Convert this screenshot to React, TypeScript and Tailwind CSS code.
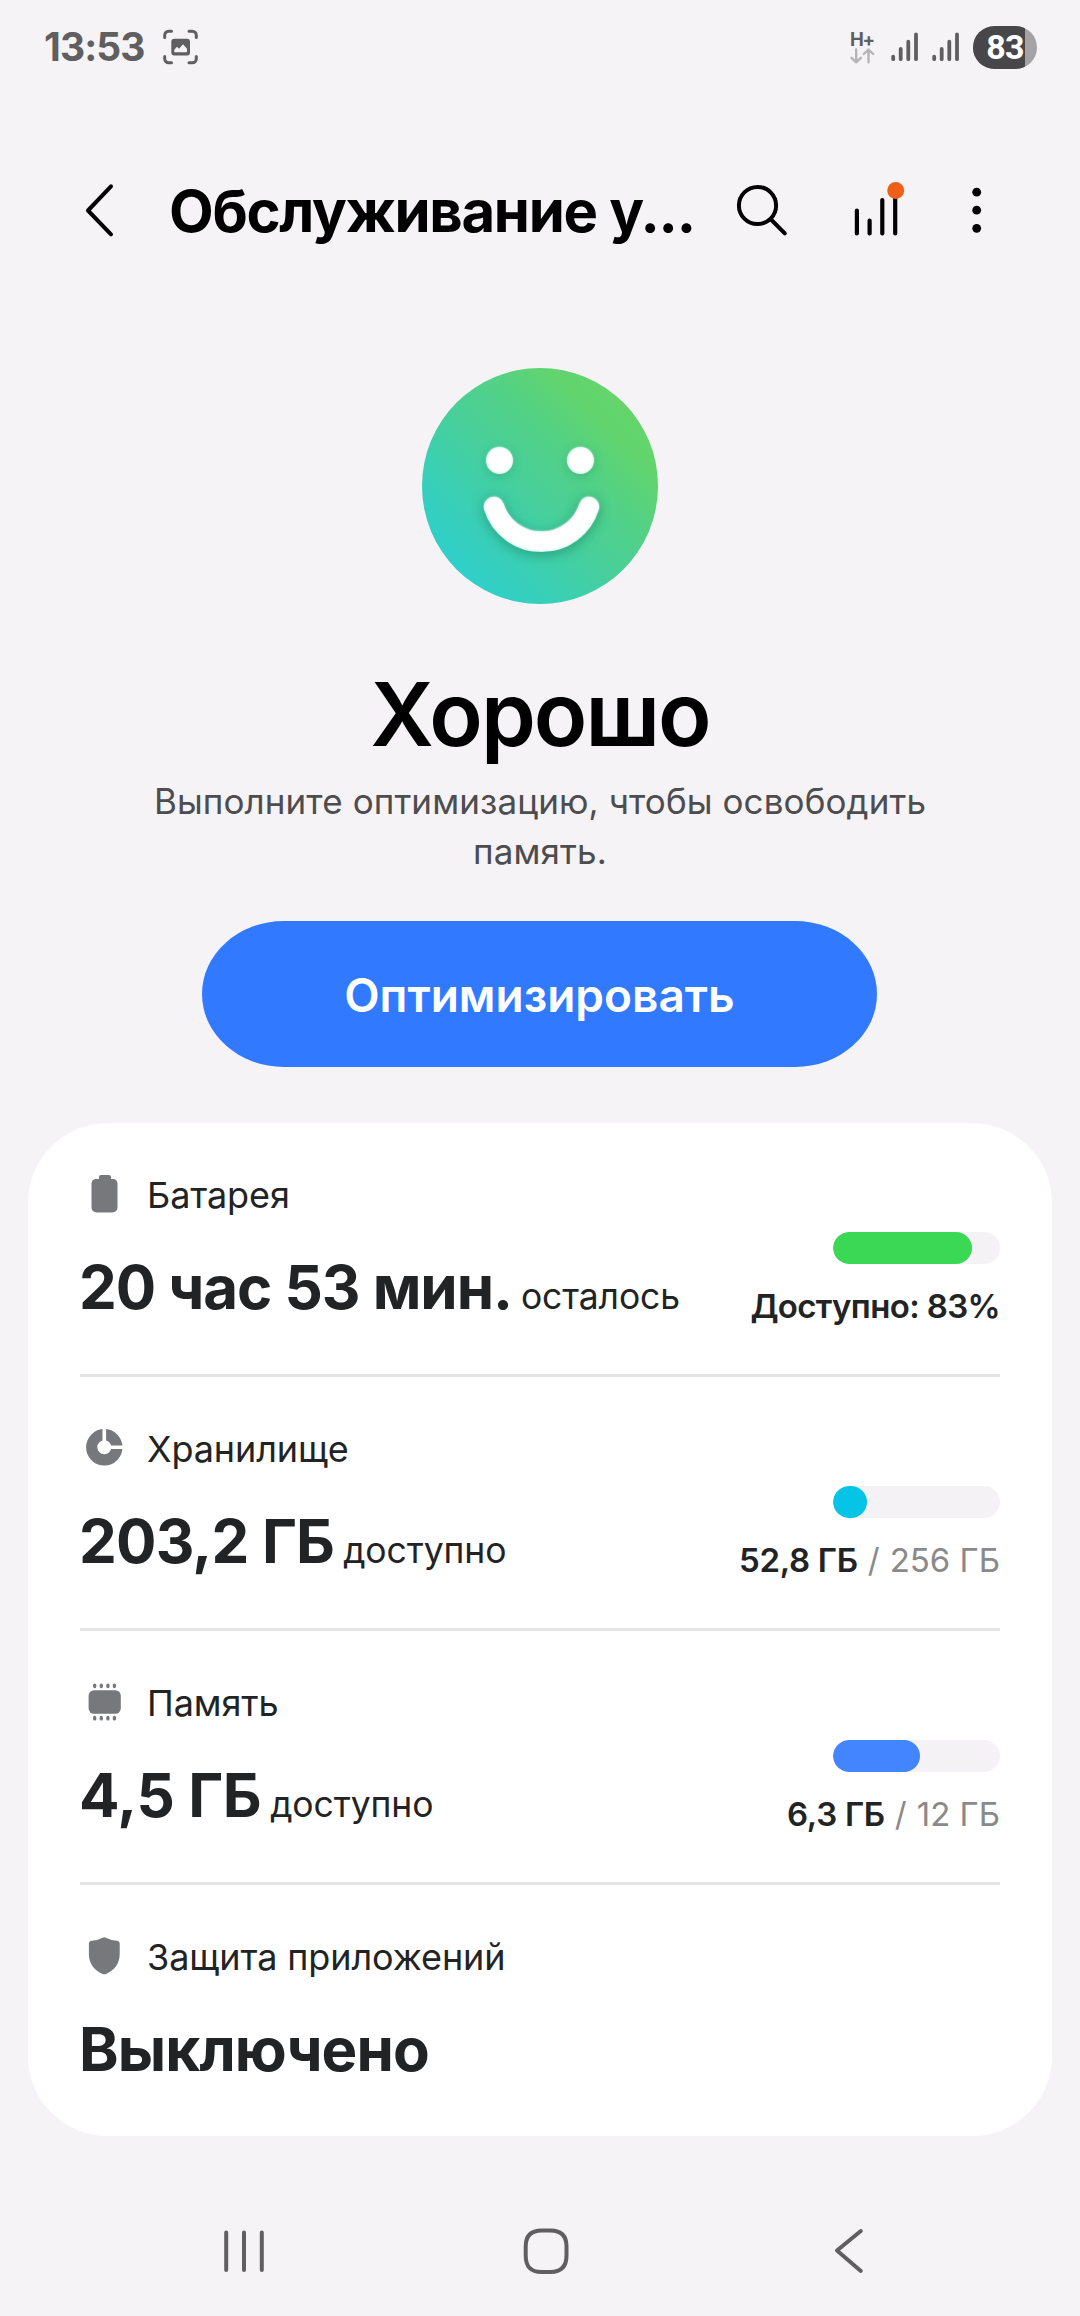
import React from "react";

function SignalBars() {
  return (
    <svg width="28" height="32" viewBox="0 0 28 32" className="shrink-0 text-[#5f5e60]" stroke="currentColor" strokeWidth="3.8" strokeLinecap="round">
      <path d="M2.2 25.6V28.2M9.7 18V28.2M17.3 10.6V28.2M25 3.4V28.2" />
    </svg>
  );
}

function StatusBar() {
  return (
    <div className="flex h-[94px] items-center pl-[44px] pr-[43px] text-[#5f5e60]">
      <div className="w-[118px] text-[39px] leading-[48px] font-bold tracking-[-0.9px]">13:53</div>
      <svg width="38" height="36" viewBox="0 0 38 36" fill="none" stroke="currentColor" strokeWidth="3" strokeLinecap="round">
        <path d="M2.7 8.6V6.2A4 4 0 0 1 6.700 2.200H9.500M27 2.200H30.300A4 4 0 0 1 34.300 6.200V8.600M34.300 27.400V29.800A4 4 0 0 1 30.300 33.800H27M9.500 33.800H6.700A4 4 0 0 1 2.700 29.800V27.400" />
        <rect x="9.300" y="9.700" width="18.700" height="16.800" rx="3" fill="currentColor" stroke="none" />
        <path d="M12.300 23.300V20.800L15 17.800L17 19.700L21 15.200L25 19.700V23.300Z" fill="#f6f3f7" stroke="none" />
      </svg>
      <div className="ml-auto flex items-center">
        <div className="flex w-[25px] flex-col items-start">
          <div className="h-[17px] text-[18.5px] leading-[17px] font-bold tracking-[-1.2px]">H+</div>
          <svg width="25" height="16" viewBox="0 0 25 16" fill="none" stroke="#b6b4b8" strokeWidth="2.400" strokeLinecap="round" strokeLinejoin="round">
            <path d="M6.200 1.500V14.300M1.500 9.800L6.200 14.300L10.900 9.800M18.500 14.300V1.500M13.800 6L18.500 1.500L23.200 6" />
          </svg>
        </div>
        <div className="ml-[16px] flex gap-[13px]">
          <SignalBars />
          <SignalBars />
        </div>
        <div className="ml-[13px] flex h-[43px] w-[64px] items-center overflow-hidden rounded-full bg-[#a4a2a7]">
          <div className="flex h-full w-[52px] items-center justify-end bg-[#474648] pr-[1px] font-['Roboto',sans-serif] text-[34px] leading-[43px] font-bold tracking-[-0.6px] text-white">
            83
          </div>
        </div>
      </div>
    </div>
  );
}

function Header() {
  return (
    <header className="flex h-[234px] items-center pl-[84px] text-black">
      <svg width="32" height="60" viewBox="0 0 32 60" fill="none" stroke="currentColor" strokeWidth="4" strokeLinecap="round" strokeLinejoin="round" className="shrink-0">
        <path d="M27 5.300L4 29.500L27 53.300" />
      </svg>
      <h1 className="ml-[53px] w-[564px] shrink-0 text-[58px] leading-[72px] font-bold tracking-[-1.3px] whitespace-nowrap">Обслуживание у...</h1>
      <svg width="60" height="60" viewBox="0 0 60 60" fill="none" stroke="currentColor" strokeWidth="4" strokeLinecap="round" className="shrink-0">
        <circle cx="24.500" cy="24.500" r="18.600" />
        <path d="M38 38.500L51.800 52.300" />
      </svg>
      <svg width="60" height="60" viewBox="0 0 60 60" fill="none" stroke="currentColor" strokeWidth="4.200" strokeLinecap="round" className="ml-[57px] shrink-0">
        <path d="M6.900 29.500V52.500M19.600 39.500V52.500M32.300 19V52.500M45.200 12V52.500" />
        <circle cx="45.700" cy="9.500" r="8.500" fill="#ee5f17" stroke="none" />
      </svg>
      <svg width="14" height="60" viewBox="0 0 14 60" fill="currentColor" className="ml-[60px] shrink-0">
        <circle cx="6.700" cy="11.200" r="4.400" />
        <circle cx="6.700" cy="29.200" r="4.400" />
        <circle cx="6.700" cy="47.300" r="4.400" />
      </svg>
    </header>
  );
}

function HappyFace() {
  return (
    <svg width="236" height="236" viewBox="0 0 236 236" fill="none" className="mt-10">
      <defs>
        <linearGradient id="face" x1="33" y1="203" x2="203" y2="33" gradientUnits="userSpaceOnUse">
          <stop offset="0" stopColor="#2fcfca" />
          <stop offset="0.180" stopColor="#38cfba" />
          <stop offset="0.450" stopColor="#48cf9b" />
          <stop offset="0.700" stopColor="#54d183" />
          <stop offset="0.850" stopColor="#60d470" />
          <stop offset="1" stopColor="#65d56a" />
        </linearGradient>
        <filter id="glow" x="-30%" y="-30%" width="160%" height="160%">
          <feGaussianBlur stdDeviation="6" />
        </filter>
        <filter id="soft" x="-10%" y="-10%" width="120%" height="120%">
          <feGaussianBlur stdDeviation="0.800" />
        </filter>
      </defs>
      <circle cx="118" cy="118" r="118" fill="url(#face)" />
      <g filter="url(#glow)" opacity="0.600" stroke="#1f8a68" strokeWidth="23" strokeLinecap="round">
        <path d="M72 141A49.500 49.500 0 0 0 167 141M77.500 94.500V94.600M158.500 94.500V94.600" />
      </g>
      <g fill="#cff6ea">
        <circle cx="77.500" cy="92.500" r="13.500" />
        <circle cx="158.500" cy="92.500" r="13.500" />
        <path d="M72 139A49.800 49.800 0 0 0 167 139" stroke="#cff6ea" strokeWidth="20.500" strokeLinecap="round" fill="none" />
      </g>
      <g filter="url(#soft)" fill="#ffffff">
        <circle cx="77.500" cy="92" r="12.800" />
        <circle cx="158.500" cy="92" r="12.800" />
        <path d="M72 138.400A49.800 49.800 0 0 0 167 138.400" stroke="#ffffff" strokeWidth="19.300" strokeLinecap="round" fill="none" />
      </g>
    </svg>
  );
}

const iconProps = { width: 48, height: 48, viewBox: "0 0 48 48", fill: "#77787c", className: "shrink-0" };

function BatteryIcon() {
  return (
    <svg {...iconProps}>
      <path d="M19 7A2 2 0 0 1 21 5H29A2 2 0 0 1 31 7V9H33A4.500 4.500 0 0 1 37.500 13.500V37.500A5 5 0 0 1 32.500 42.500H16.500A5 5 0 0 1 11.500 37.500V13.500A4.500 4.500 0 0 1 16 9H19Z" />
    </svg>
  );
}

function StorageIcon() {
  return (
    <svg {...iconProps}>
      <circle cx="24.300" cy="23.300" r="12.600" fill="none" stroke="#77787c" strokeWidth="11.200" />
      <path d="M24.300 4V18M29 23.300H44" stroke="#ffffff" strokeWidth="3.600" />
    </svg>
  );
}

function MemoryIcon() {
  return (
    <svg {...iconProps}>
      <rect x="8.600" y="12.200" width="32.200" height="23.600" rx="5.500" />
      <path d="M14.700 7.100V8.600M21.300 7.100V8.600M27.900 7.100V8.600M34.400 7.100V8.600M14.700 39.400V40.900M21.300 39.400V40.900M27.900 39.400V40.900M34.400 39.400V40.900" stroke="#77787c" strokeWidth="3.300" strokeLinecap="round" />
    </svg>
  );
}

function ShieldIcon() {
  return (
    <svg {...iconProps}>
      <path d="M22.700 5.700Q24.300 4.900 25.900 5.700Q30.500 8.200 37 8.800Q39.700 9.200 39.700 11.800V22C39.700 32 34 38.500 26 41.900Q24.300 42.600 22.600 41.900C14.600 38.500 8.900 32 8.900 22V11.800Q8.900 9.200 11.600 8.800Q18.100 8.200 22.700 5.700Z" />
    </svg>
  );
}

type RowProps = {
  icon: React.ReactNode;
  label: string;
  value: string;
  valueClass?: string;
  suffix?: string;
  barClass?: string;
  right?: React.ReactNode;
};

function Row({ icon, label, value, valueClass = "", suffix, barClass, right }: RowProps) {
  return (
    <div className="box-content flex h-[251px] justify-between border-b-[3px] border-[#e4e4e5] last:border-b-0">
      <div className="pt-[47px]">
        <div className="flex h-[50px] items-start">
          {icon}
          <div className="ml-[19px] text-[36px] leading-[50px] tracking-[-0.1px]">{label}</div>
        </div>
        <div className="mt-[31px] -ml-px flex items-baseline gap-[9px] whitespace-nowrap">
          <div className={`text-[60px] leading-[72px] font-bold ${valueClass}`}>{value}</div>
          {suffix && <div className="text-[35.5px] tracking-[-0.1px]">{suffix}</div>}
        </div>
      </div>
      {right && (
        <div className="flex flex-col items-end pt-[109px]">
          <div className="h-[32px] w-[167px] overflow-hidden rounded-full bg-[#f5f2f6]">
            <div className={`h-full rounded-full ${barClass}`} />
          </div>
          <div className="mt-[22px] flex text-[33px] leading-[40px] whitespace-nowrap">{right}</div>
        </div>
      )}
    </div>
  );
}

function Usage({ used, total }: { used: string; total: string }) {
  return (
    <>
      <span className="font-semibold tracking-[-0.3px]">{used}</span>
      <span className="ml-[10px] text-[#8a8a8b]">/</span>
      <span className="ml-[10px] text-[#8a8a8b]">{total}</span>
    </>
  );
}

function NavBar() {
  return (
    <nav className="mt-[91px] flex pl-[220px] text-[#5f5e61]">
      <svg width="48" height="48" viewBox="0 0 48 48" stroke="currentColor" strokeWidth="4" strokeLinecap="round">
        <path d="M6.200 5.500V43M24 5.500V43M41.800 5.500V43" />
      </svg>
      <svg width="48" height="48" viewBox="0 0 48 48" fill="none" stroke="currentColor" strokeWidth="4" className="ml-[254px]">
        <path d="M19.500 3.500H28.500C39.500 3.500 44.500 9 44.500 19.500V28.500C44.500 39.500 39.500 45 28.500 45H19.500C8.700 45 3.700 39.500 3.700 28.500V19.500C3.700 9 8.700 3.500 19.500 3.500Z" />
      </svg>
      <svg width="48" height="48" viewBox="0 0 48 48" fill="none" stroke="currentColor" strokeWidth="4" strokeLinecap="round" strokeLinejoin="round" className="ml-[255px]">
        <path d="M35.800 4L12 23.500L35.800 44" />
      </svg>
    </nav>
  );
}

export default function App() {
  return (
    <div className="flex h-[2316px] w-[1080px] flex-col overflow-hidden bg-[#f6f3f7] font-['Inter',sans-serif] text-[#222324]">
      <StatusBar />
      <Header />
      <section className="flex flex-col items-center">
        <HappyFace />
        <h2 className="mt-[60px] text-[88px] leading-[100px] font-semibold tracking-[-2px] text-black">Хорошо</h2>
        <p className="mt-3 w-[790px] text-center text-[35px] leading-[50px] tracking-[0.1px] text-[#4d4c4f]">
          Выполните оптимизацию, чтобы освободить память.
        </p>
        <button className="mt-[45px] mr-px h-[146px] w-[675px] rounded-[82px/73px] bg-[#317aff] pt-px text-[46px] leading-[60px] font-semibold text-white">
          Оптимизировать
        </button>
      </section>
      <main className="mx-[28px] mt-14 rounded-[80px] bg-white px-[52px]">
        <Row
          icon={<BatteryIcon />}
          label="Батарея"
          value="20 час 53 мин."
          valueClass="tracking-[-1.05px]"
          suffix="осталось"
          barClass="w-[139px] bg-[#3bd856]"
          right={<span className="font-semibold tracking-[-0.65px]">Доступно: 83%</span>}
        />
        <Row
          icon={<StorageIcon />}
          label="Хранилище"
          value="203,2 ГБ"
          valueClass="tracking-[-0.8px]"
          suffix="доступно"
          barClass="w-[34px] bg-[#06c4e6]"
          right={<Usage used="52,8 ГБ" total="256 ГБ" />}
        />
        <Row
          icon={<MemoryIcon />}
          label="Память"
          value="4,5 ГБ"
          valueClass="tracking-[-0.4px]"
          suffix="доступно"
          barClass="w-[87px] bg-[#4285ff]"
          right={<Usage used="6,3 ГБ" total="12 ГБ" />}
        />
        <Row icon={<ShieldIcon />} label="Защита приложений" value="Выключено" valueClass="tracking-[-0.9px]" />
      </main>
      <NavBar />
    </div>
  );
}
